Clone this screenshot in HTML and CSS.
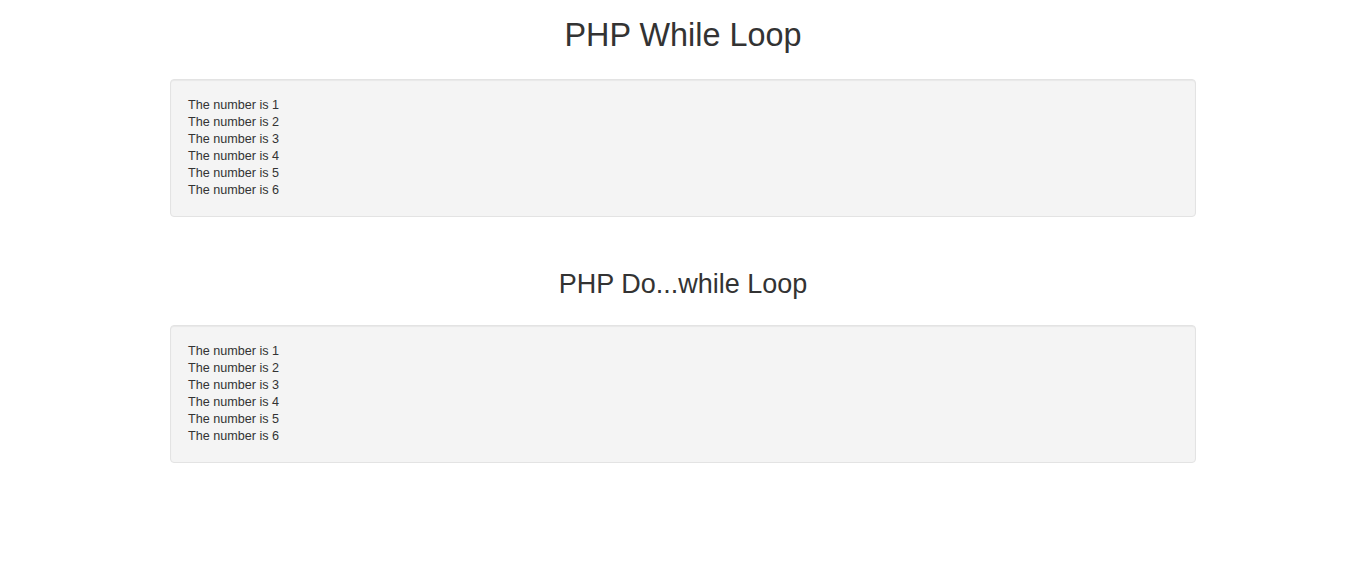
FILE: index.html
```html
<!DOCTYPE html>
<html>
<head>
<meta charset="utf-8">
<title>PHP Loops</title>
<link rel="stylesheet" href="styles.css">
</head>
<body>
<div class="container">
  <h1 class="title">PHP While Loop</h1>
  <div class="well">
    The number is 1<br>
    The number is 2<br>
    The number is 3<br>
    The number is 4<br>
    The number is 5<br>
    The number is 6<br>
  </div>
  <h2 class="subtitle">PHP Do...while Loop</h2>
  <div class="well">
    The number is 1<br>
    The number is 2<br>
    The number is 3<br>
    The number is 4<br>
    The number is 5<br>
    The number is 6<br>
  </div>
</div>
</body>
</html>
```
FILE: styles.css
```css
html, body {
  margin: 0;
  padding: 0;
  background: #fff;
}
body {
  font-family: "Liberation Sans", Arial, sans-serif;
  color: #333;
  font-size: 12.6px;
  line-height: 17px;
}
.container {
  width: 1026px;
  margin: 0 auto;
}
.title {
  font-size: 32.4px;
  font-weight: 400;
  line-height: 36px;
  text-align: center;
  margin: 17px 0 26px;
}
.subtitle {
  font-size: 27px;
  font-weight: 400;
  line-height: 32px;
  text-align: center;
  margin: 51px 0 25px;
}
.well {
  background: #f4f4f4;
  border: 1px solid #e3e3e3;
  border-radius: 4px;
  box-shadow: inset 0 1px 1px rgba(0,0,0,.05);
  padding: 17px 17px 17px;
}
```
